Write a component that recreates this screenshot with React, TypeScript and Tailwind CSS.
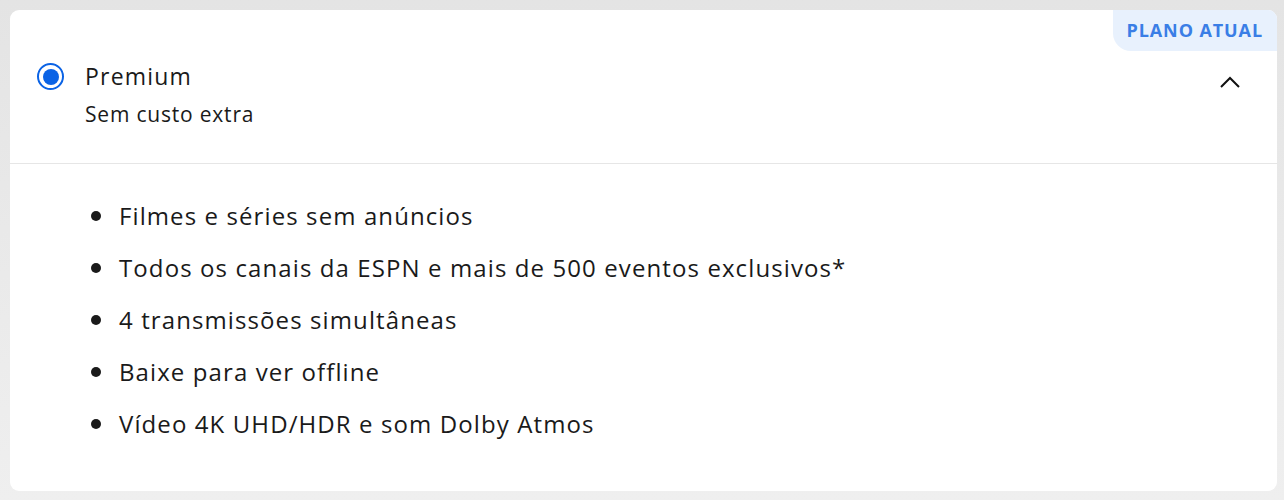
import React from "react";

const features = [
  "Filmes e séries sem anúncios",
  "Todos os canais da ESPN e mais de 500 eventos exclusivos*",
  "4 transmissões simultâneas",
  "Baixe para ver offline",
  "Vídeo 4K UHD/HDR e som Dolby Atmos",
];

export default function App() {
  return (
    <div
      className="min-h-[500px] w-full bg-gradient-to-b from-[#e4e4e4] to-[#efefef] px-[10px] pt-[10px] pb-[9px]"
      style={{ fontFamily: '"Open Sans", "Noto Sans", sans-serif' }}
    >
      <div className="relative h-[481px] w-[1267px] overflow-hidden rounded-[9px] bg-white text-[#1a1a1a]">
        <div className="absolute right-0 top-0 rounded-bl-[18px] bg-[#e8f1fd] px-[14px] pb-[10px] pt-[10px] text-[18px] font-bold leading-[21px] tracking-[0.9px] text-[#3a7ee6]">
          PLANO ATUAL
        </div>
        <div className="flex items-start border-b border-[#e6e6e6] pl-[27px] pr-[36px] pt-[51px] pb-[36px]">
          <div className="mt-[2px] flex h-[27px] w-[27px] items-center justify-center rounded-full border-[2px] border-[#0b63e5]">
            <div className="h-[16px] w-[16px] rounded-full bg-[#0b63e5]" />
          </div>
          <div className="ml-[21px] flex-1">
            <div className="text-[23px] leading-[30px] tracking-[1.2px]">Premium</div>
            <div className="mt-[10px] text-[21px] leading-[26px] tracking-[0.8px]">Sem custo extra</div>
          </div>
          <svg className="mt-[14px]" width="22" height="14" viewBox="0 0 22 14" fill="none">
            <path d="M2 12 L11 3 L20 12" stroke="#111" strokeWidth="2" />
          </svg>
        </div>
        <ul className="flex flex-col gap-[22px] pl-[81px] pt-[37px]">
          {features.map((f) => (
            <li key={f} className="flex items-center text-[24px] leading-[30px] tracking-[1.1px]">
              <span className="mr-[18px] h-[10px] w-[10px] rounded-full bg-[#1a1a1a]" />
              {f}
            </li>
          ))}
        </ul>
      </div>
    </div>
  );
}
